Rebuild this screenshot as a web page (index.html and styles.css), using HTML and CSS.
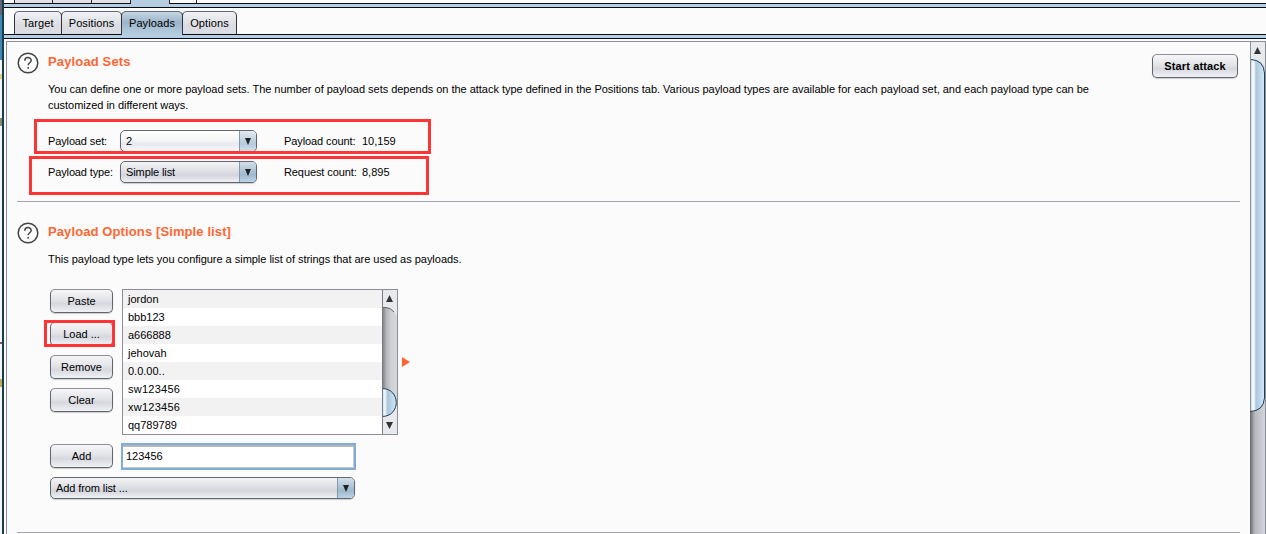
FILE: index.html
```html
<!DOCTYPE html>
<html lang="en">
<head>
<meta charset="utf-8">
<title>Payloads</title>
<link rel="stylesheet" href="styles.css">
</head>
<body>
<div class="window">
  <div class="edge"></div>
  <main class="app">
    <div class="outer-tabs"><i class="w40"></i><i class="w38"></i><i class="w38"></i><i class="active"></i><i class="w25"></i></div>
    <div class="band upper"></div>
    <nav class="tabs">
      <button class="tab t1">Target</button><button class="tab t2">Positions</button><button class="tab t3 selected">Payloads</button><button class="tab t4">Options</button>
    </nav>
    <div class="band lower"></div>
    <div class="pane">
      <div class="content">
        <section class="sets">
          <svg class="help" viewBox="0 0 22 22"><circle cx="11" cy="11" r="9.8"/><path d="M7.8 8.7C7.8 4.5 14.2 4.8 14.2 8.3C14.2 10.7 11.2 10.8 11.2 13.3M11.2 15V16.7"/></svg>
          <div class="body">
            <header><h2>Payload Sets</h2><button class="btn start">Start attack</button></header>
            <p class="intro"><span class="line">You can define one or more payload sets. The number of payload sets depends on the attack type defined in the Positions tab. Various payload types are available for each payload set, and each payload type can be</span><span class="line">customized in different ways.</span></p>
            <div class="row r1"><label>Payload set:</label><div class="combo light"><span>2</span><i class="drop"></i></div><span class="count">Payload count:</span><span>10,159</span></div>
            <div class="row r2"><label>Payload type:</label><div class="combo"><span>Simple list</span><i class="drop"></i></div><span class="count">Request count:</span><span>8,895</span></div>
          </div>
        </section>
        <section class="options">
          <svg class="help" viewBox="0 0 22 22"><circle cx="11" cy="11" r="9.8"/><path d="M7.8 8.7C7.8 4.5 14.2 4.8 14.2 8.3C14.2 10.7 11.2 10.8 11.2 13.3M11.2 15V16.7"/></svg>
          <div class="body">
            <h2 class="wide">Payload Options [Simple list]</h2>
            <p class="desc"><span class="line">This payload type lets you configure a simple list of strings that are used as payloads.</span></p>
            <div class="editor">
              <div class="actions"><button class="btn">Paste</button><button class="btn">Load ...</button><button class="btn">Remove</button><button class="btn">Clear</button></div>
              <div class="list">
                <ul><li>jordon</li><li>bbb123</li><li>a666888</li><li>jehovah</li><li>0.0.00..</li><li class="spaced">sw123456</li><li class="spaced">xw123456</li><li>qq789789</li></ul>
                <svg class="scroll" viewBox="0 0 15 144">
                  <defs><linearGradient id="track"><stop offset="0" stop-color="#77787b"/><stop offset=".3" stop-color="#b5b6bb"/><stop offset=".6" stop-color="#cfd0d6"/><stop offset="1" stop-color="#d6d7dc"/></linearGradient>
                  <linearGradient id="thumb"><stop offset="0" stop-color="#c5d8e6"/><stop offset=".2" stop-color="#f3f8fb"/><stop offset=".4" stop-color="#a9c6dc"/><stop offset="1" stop-color="#d3eafb"/></linearGradient></defs>
                  <path fill="#e8e9ec" d="M0 0H15V144H0z"/><path fill="url(#track)" d="M0 17H4Q12 18 15 26V116H0z"/><path fill="none" stroke="#666" d="M0 17.5H4Q9 18 12 22"/>
                  <path fill="url(#thumb)" stroke="#233d55" d="M0 98.5C19 98.5 19 126.500 0 126.500"/><path fill="#333" d="M4 12L7.500 5L11 12zM4 132H11L7.500 139z"/><path stroke="#777b83" d="M.5 0V144"/>
                </svg>
              </div>
              <svg class="pointer" viewBox="0 0 8 10"><path fill="#ff6633" d="M0 0L8 5L0 10z"/></svg>
            </div>
            <div class="add"><button class="btn">Add</button><input type="text" value="123456"></div>
            <div class="combo from"><span>Add from list ...</span><i class="drop"></i></div>
          </div>
        </section>
      </div>
      <svg class="mainscroll" viewBox="0 0 16 492">
        <defs><linearGradient id="bar"><stop offset="0" stop-color="#65676c"/><stop offset=".3" stop-color="#b8b9be"/><stop offset="1" stop-color="#d6d7dc"/></linearGradient>
        <linearGradient id="grip"><stop offset="0" stop-color="#aebfca"/><stop offset=".18" stop-color="#f3f7fb"/><stop offset=".3" stop-color="#edf5fa"/><stop offset=".4" stop-color="#a9c6dc"/><stop offset="1" stop-color="#d3eafb"/></linearGradient></defs>
        <path fill="url(#bar)" d="M0 18H16V492H0z"/><path fill="#e8e9ec" d="M0 0H16V27Q12 18 3 18H0z"/>
        <path fill="url(#grip)" stroke="#233d55" d="M0 17.500H1Q13.500 18 14.500 31V356Q13.500 369 0 369.500"/><path stroke="#8d9199" d="M.5 0V369M15.500 0V492"/><path fill="#333" d="M4 12L7.500 5L11 12z"/>
      </svg>
    </div>
  </main>
  <div class="mark m1"></div><div class="mark m2"></div><div class="mark m3"></div>
</div>
</body>
</html>
```
FILE: styles.css
```css
* { box-sizing: border-box; }
body { margin: 0; overflow: hidden; background: #fbfbfb; color: #000; font: 11px/16px "Liberation Sans", Arial, sans-serif; }
button, input { font: inherit; color: inherit; }
.window { position: relative; display: flex; width: 1266px; height: 534px; overflow: hidden; }
.edge { width: 4px; flex: none; border-right: 2px solid #153f50; background: linear-gradient(#667 0 15px, #4486b4 15px 60px, #f5f5f5 60px 74px, #d9d485 74px 79px, #f5f5f5 79px 118px, #8b8c65 118px 126px, #f5f5f5 126px 342px, #8c5553 342px 344px, #f5f5f5 344px 379px, #b5ae57 379px 387px, #f5f5f5 387px); }
.app { flex: 1; min-width: 0; }
.outer-tabs { display: flex; height: 3px; padding-left: 10px; }
.outer-tabs i { border: 1px solid #222938; border-width: 0 1px 0 0; background: #e2e2e6; }
.outer-tabs i:first-child { border-left-width: 1px; }
.w40 { width: 39px; }
.w38 { width: 39px; }
.outer-tabs .active { position: relative; width: 39px; height: 4px; background: #b7cee2; }
.outer-tabs .w25 { width: 27px; background: #fbfbfb; }
.band { height: 5px; border-top: 1px solid #080c17; border-bottom: 1px solid #080c17; background: #b7cee2; }
.tabs { display: flex; height: 26px; padding: 3px 0 0 10px; }
.tab { height: 23px; margin-right: -1px; padding: 0; border: 1px solid #303440; border-top-color: #646a75; border-bottom: 0; border-radius: 5px 5px 0 0; background: linear-gradient(#f1f2f5, #dcdde2 60%, #dcdde2); letter-spacing: .1px; }
.t1 { width: 48px; }
.t2 { width: 61px; }
.t3 { width: 62px; }
.t4 { width: 55px; }
.tab.selected { position: relative; height: 24px; padding-bottom: 1px; background: linear-gradient(#c3d5e3, #9db5ca 45%, #b7cee2); }
.pane { display: flex; height: 493px; margin: 2px 0 0 2px; border: 1px solid #8a8e98; border-right: 0; border-bottom: 0; }
.content { width: 1243px; flex: none; padding: 0 10px; }
.mainscroll { width: 16px; height: 492px; flex: none; }
section { display: flex; gap: 9px; border-bottom: 1px solid #a3a6b0; }
.sets { height: 160px; padding-top: 10px; }
.options { height: 331px; padding-top: 20px; }
.help { width: 22px; height: 22px; flex: none; fill: none; stroke: #454545; stroke-width: 1.5; }
.body { flex: 1; min-width: 0; }
header { display: flex; justify-content: space-between; height: 29px; }
h2 { margin: 1px 0 0; color: #ff6633; font-size: 13px; line-height: 18px; font-weight: bold; white-space: nowrap; letter-spacing: .14px; }
.wide { letter-spacing: .11px; }
.btn { width: 63px; height: 24px; padding: 0; border: 1px solid #60656e; border-top-color: #8d9096; border-radius: 5px; background: linear-gradient(#f6f6f8, #e3e4e8 45%, #d6d8df 62%, #f0f1f6); box-shadow: 0 1px 1px #ccc; }
.start { width: 86px; margin: 2px 2px 0 0; font-weight: bold; letter-spacing: .12px; }
p { margin: 0; }
.intro { height: 46px; }
.line { display: block; white-space: nowrap; letter-spacing: -.025px; }
.row { display: flex; align-items: center; height: 22px; }
.row label { width: 72px; letter-spacing: -.13px; }
.r1 { margin-top: 3px; }
.r2 { margin-top: 9px; }
.count { width: 78px; margin-left: 27px; letter-spacing: -.1px; }
.combo { display: flex; width: 137px; height: 22px; border: 1px solid #606773; border-radius: 5px; background: linear-gradient(#f4f4f6, #dfe0e5 45%, #d3d5dc 65%, #eff1f5); overflow: hidden; box-shadow: 0 1px 1px #ccc; }
.combo span { flex: 1; padding: 2px 0 0 5px; letter-spacing: -.1px; }
.combo.light { background: linear-gradient(#fff, #f3f4f6 50%, #e6e9ee 65%, #f6f8fa); }
.drop { display: flex; width: 17px; align-items: center; justify-content: center; border-left: 1px solid #8199ac; background: linear-gradient(#d5e0e9, #a9c0d2 50%, #9fb9cd 65%, #bed5e8); }
.light .drop { background: linear-gradient(#e2ebf1, #bdd0df 50%, #b5cbdc 65%, #cfe0ed); }
.drop::before { content: ""; border: 3.5px solid transparent; border-top: 7px solid #222; border-bottom: 0; }
.desc { margin-top: 10px; }
.editor { display: flex; margin: 22px 0 0 2px; height: 145px; }
.actions { display: flex; flex-direction: column; gap: 9px; }
.list { display: flex; width: 276px; height: 146px; margin-left: 9px; border: 1px solid #8b8e99; }
ul { width: 259px; padding: 0; margin: 0; list-style: none; }
li { height: 18px; padding: 1px 5px; background: #fff; }
li:nth-child(odd) { background: #f2f2f2; }
.spaced { letter-spacing: .25px; }
.scroll { width: 15px; height: 144px; }
.pointer { width: 8px; height: 10px; margin: 68px 0 0 4px; }
.add { display: flex; align-items: center; height: 28px; margin: 8px 0 0 2px; }
input { width: 235px; height: 27px; margin-left: 8px; padding: 0 3px; border: 2px solid #7eaed6; outline: 0; background: #fff; box-shadow: inset 0 2px #b7b7b7, inset -1px -1px #c9c9c9; }
.from { width: 305px; margin: 7px 0 0 2px; }
.mark { position: absolute; border: 3px solid #ff3535; }
.m1 { left: 34px; top: 119px; width: 397px; height: 35px; }
.m2 { left: 29px; top: 156px; width: 400px; height: 39px; }
.m3 { left: 44px; top: 320px; width: 71px; height: 27px; }
```
